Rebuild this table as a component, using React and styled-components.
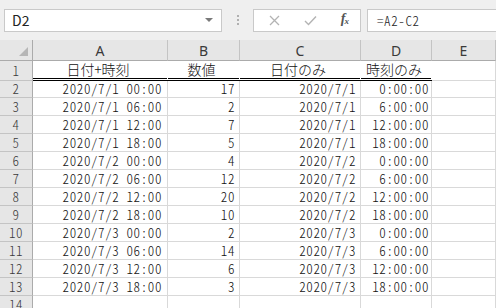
import React from "react";
import styled, { createGlobalStyle } from "styled-components";

const GlobalStyle = createGlobalStyle`
  html, body {
    margin: 0;
    padding: 0;
    background: #ffffff;
    overflow: hidden;
  }
`;

const Window = styled.div`
  width: 496px;
  height: 308px;
  overflow: hidden;
  display: flex;
  flex-direction: column;
`;

const Toolbar = styled.div`
  height: 40px;
  flex-shrink: 0;
  background: #efefef;
  display: flex;
  align-items: center;
  padding: 0 0 0 4px;
  box-sizing: border-box;
`;

const Box = styled.div`
  height: 23px;
  box-sizing: border-box;
  background: #ffffff;
  border: 1px solid #c9c9c9;
  display: flex;
  align-items: center;
  font-family: "Noto Sans CJK JP", "Noto Sans", sans-serif;
  font-size: 14px;
  line-height: 17px;
  color: #222;
`;

const NameBox = styled(Box)`
  width: 218px;
  padding: 0 8px 0 7px;
  justify-content: space-between;
`;

const DropArrow = styled.span`
  width: 0;
  height: 0;
  border-left: 4px solid transparent;
  border-right: 4px solid transparent;
  border-top: 4px solid #7a7a7a;
`;

const Grip = styled.div`
  width: 31px;
  display: flex;
  flex-direction: column;
  align-items: center;
  gap: 2px;

  span {
    width: 2px;
    height: 2px;
    background: #b0b0b0;
  }
`;

const FxButtons = styled(Box)`
  width: 108px;
  padding: 0 12px 0 15px;
  justify-content: space-between;
`;

const Fx = styled.span`
  font-family: "Liberation Serif", serif;
  font-style: italic;
  font-weight: bold;
  font-size: 14px;
  color: #555;
  letter-spacing: -1px;

  sub {
    font-size: 9px;
    vertical-align: -1px;
  }
`;

const FormulaBox = styled(Box)`
  flex: 1;
  margin-left: 6px;
  border-right: none;
  padding-left: 9px;
  font-size: 13px;
  font-weight: 300;
  font-feature-settings: "hwid" 1;
  letter-spacing: 0.6px;
`;

const Sheet = styled.div`
  display: grid;
  grid-template-columns: 33px 135px 72px 121px 71px 1fr;
  grid-template-rows: 21px 20px 17px repeat(11, 18px) 18px;
  font-family: "Noto Sans CJK JP", sans-serif;
  font-size: 13px;
  font-weight: 300;
  color: #111;
`;

const Cell = styled.div`
  box-sizing: border-box;
  display: flex;
  align-items: flex-end;
  justify-content: ${(p) => (p.$center ? "center" : "flex-end")};
  padding: 0 ${(p) => p.$pr || 4}px 1px 0;
  line-height: 15px;
  font-size: ${(p) => (p.$title ? 14 : 13)}px;
  border-right: 1px solid ${(p) => (p.$title ? "transparent" : "#d9d9d9")};
  border-bottom: ${(p) => (p.$title ? "3px double #000" : "1px solid #d9d9d9")};
  font-feature-settings: "hwid" 1;
  letter-spacing: ${(p) => (p.$title ? 0 : 0.6)}px;
  white-space: nowrap;
`;

const ColHead = styled.div`
  box-sizing: border-box;
  background: #e6e6e6;
  border-right: 1px solid #c4c4c4;
  border-bottom: 1px solid #ababab;
  display: flex;
  align-items: center;
  justify-content: center;
  padding-top: 1px;
  font-family: "Noto Sans", "Liberation Sans", sans-serif;
  font-size: 14px;
  font-weight: 400;
  line-height: 17px;
  color: #3a3a3a;
`;

const Corner = styled(ColHead)`
  position: relative;
  border-right-color: #ababab;

  &::after {
    content: "";
    position: absolute;
    right: 4px;
    bottom: 4px;
    width: 0;
    height: 0;
    border-left: 9px solid transparent;
    border-bottom: 9px solid #b6b6b6;
  }
`;

const RowHead = styled.div`
  box-sizing: border-box;
  background: #e6e6e6;
  border-right: 1px solid #ababab;
  border-bottom: 1px solid #c4c4c4;
  display: flex;
  align-items: center;
  justify-content: center;
  line-height: 14px;
  font-feature-settings: "hwid" 1;
  letter-spacing: 0.6px;
  color: #3a3a3a;
`;

const EmptyCell = styled.div`
  box-sizing: border-box;
  border-bottom: 1px solid #d9d9d9;
  border-right: 1px solid #d9d9d9;
`;

const dates = ["2020/7/1", "2020/7/2", "2020/7/3"];
const hours = ["00", "06", "12", "18"];
const values = [17, 2, 7, 5, 4, 12, 20, 10, 2, 14, 6, 3];

const rows = values.map((v, i) => {
  const d = dates[Math.floor(i / 4)];
  const h = hours[i % 4];
  return {
    stamp: `${d} ${h}:00`,
    value: v,
    date: d,
    time: `${parseInt(h, 10)}:00:00`,
  };
});

function CrossIcon() {
  return (
    <svg width="11" height="11" viewBox="0 0 11 11">
      <path d="M1 1 L10 10 M10 1 L1 10" stroke="#b3b3b3" strokeWidth="1.3" fill="none" />
    </svg>
  );
}

function CheckIcon() {
  return (
    <svg width="13" height="11" viewBox="0 0 13 11">
      <path d="M1 6 L4.5 9.5 L12 1.5" stroke="#b3b3b3" strokeWidth="1.4" fill="none" />
    </svg>
  );
}

export default function App() {
  return (
    <Window>
      <GlobalStyle />
      <Toolbar>
        <NameBox>
          <span>D2</span>
          <DropArrow />
        </NameBox>
        <Grip>
          <span />
          <span />
          <span />
        </Grip>
        <FxButtons>
          <CrossIcon />
          <CheckIcon />
          <Fx>
            f<sub>x</sub>
          </Fx>
        </FxButtons>
        <FormulaBox>=A2-C2</FormulaBox>
      </Toolbar>
      <Sheet>
        <Corner />
        {["A", "B", "C", "D", "E"].map((c) => (
          <ColHead key={c}>{c}</ColHead>
        ))}

        <RowHead>1</RowHead>
        <Cell $center $title $pr={0}>日付+時刻</Cell>
        <Cell $center $title $pr={0}>数値</Cell>
        <Cell $center $title $pr={0}>日付のみ</Cell>
        <Cell $center $title $pr={0}>時刻のみ</Cell>
        <EmptyCell />

        {rows.map((r, i) => (
          <React.Fragment key={i}>
            <RowHead>{i + 2}</RowHead>
            <Cell $pr={5}>{r.stamp}</Cell>
            <Cell $pr={4}>{r.value}</Cell>
            <Cell $pr={4}>{r.date}</Cell>
            <Cell $pr={2}>{r.time}</Cell>
            <EmptyCell />
          </React.Fragment>
        ))}

        <RowHead>14</RowHead>
        <EmptyCell />
        <EmptyCell />
        <EmptyCell />
        <EmptyCell />
        <EmptyCell />
      </Sheet>
    </Window>
  );
}
